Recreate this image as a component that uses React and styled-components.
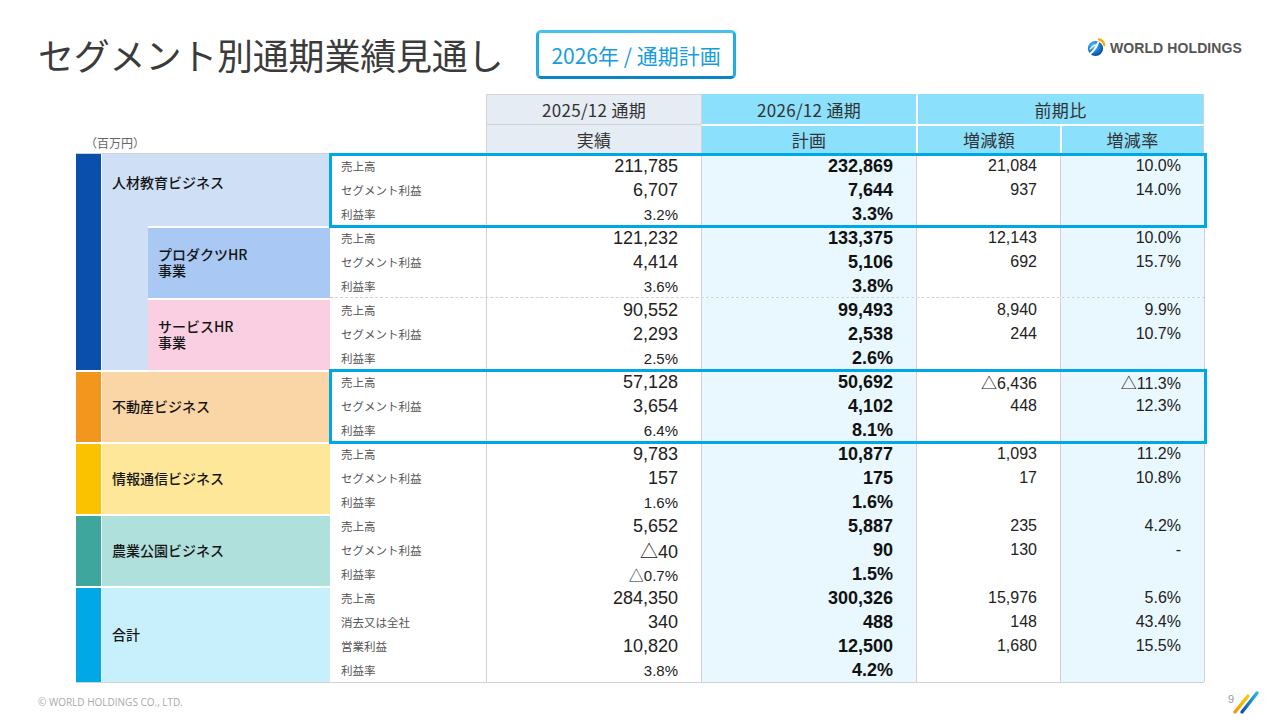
import styled, { createGlobalStyle } from 'styled-components';


const LINE = '#cfd2d6';
const PLAN_BG = '#e9f8fe';
const HEAD_PLAN = '#8be0fb';
const HEAD_PAST = '#e6ecf3';
const ACCENT = '#00a7e5';
const NUM_FONT = '"Liberation Sans", "Noto Sans CJK JP", sans-serif';


const GlobalStyle = createGlobalStyle`
    html, body {
        margin: 0;
        padding: 0;
        background: #fff;
        font-family: "Noto Sans CJK JP", "Noto Sans", sans-serif;
        color: #222;
    }
`;

const Page = styled.div`
    width: 1280px;
    height: 720px;
    display: flex;
    flex-direction: column;
    overflow: hidden;
    background: #fff;
`;

const TopBar = styled.header`
    display: flex;
    align-items: center;
    height: 49px;
    padding: 30px 38px 0 38px;
`;
const Title = styled.h1`
    margin: 0;
    font-size: 36px;
    font-weight: 400;
    line-height: 49px;
    color: #3b3b3b;
    letter-spacing: -0.2px;
`;
const Badge = styled.div`
    margin-left: 33px;
    height: 43px;
    padding: 0 12px;
    display: flex;
    align-items: center;
    border: 3px solid #22ade6;
    border-top-color: #45c3f0;
    border-bottom-color: #0a86c4;
    border-radius: 5px;
    color: #169ddd;
    font-size: 21px;
    white-space: nowrap;
`;
const Logo = styled.div`
    margin-left: auto;
    align-self: flex-start;
    margin-top: 8px;
    display: flex;
    align-items: center;
    gap: 4px;
`;
const LogoText = styled.span`
    font-family: "Liberation Sans", sans-serif;
    font-weight: 700;
    font-size: 14px;
    color: #555;
    letter-spacing: 0.1px;
`;

const Table = styled.section`
    margin: 15px 0 0 76px;
    width: 1128px;
`;

const HeadGrid = styled.div`
    display: grid;
    grid-template-columns: 410px 215px 215px 144px 144px;
    grid-template-rows: 30px 29px;
`;
const HeadCorner = styled.div`
    grid-column: 1;
    grid-row: 1 / 3;
    display: flex;
    align-items: flex-end;
`;
const Unit = styled.span`
    padding: 0 0 2px 9px;
    font-size: 12px;
    color: #666;
`;
const HeadCell = styled.div`
    grid-column: ${p => p.$col};
    grid-row: ${p => p.$row};
    display: flex;
    align-items: center;
    justify-content: center;
    background: ${p => p.$past ? HEAD_PAST : HEAD_PLAN};
    border-left: ${p => p.$left || 'none'};
    border-top: ${p => p.$top || 'none'};
    border-right: ${p => p.$last ? `1px solid ${LINE}` : 'none'};
    font-size: 17px;
    color: #333;
    letter-spacing: 0.3px;
`;

const Body = styled.div`
    border-top: 1px solid ${LINE};
    border-bottom: 1px solid ${LINE};
`;
const Segment = styled.div`
    display: flex;
`;
const Bar = styled.div`
    width: 26px;
    flex: none;
    background: ${p => p.$color};
    box-shadow: inset -1px 0 0 #fff ${p => p.$first ? '' : ', inset 0 2px 0 #fff'};
`;
const Stack = styled.div`
    display: flex;
    flex-direction: column;
    background: ${p => p.$bg || 'transparent'};
    box-shadow: ${p => p.$first ? 'none' : 'inset 0 2px 0 #fff'};
`;
const Block = styled.div`
    display: flex;
`;
const Label = styled.div`
    flex: none;
    width: ${p => p.$sub ? '182px' : '228px'};
    margin-left: ${p => p.$sub ? '46px' : '0'};
    box-sizing: border-box;
    padding: 0 0 ${p => p.$raise ? '16px' : '0'} 10px;
    display: flex;
    align-items: center;
    background: ${p => p.$bg};
    box-shadow: ${p => p.$top ? 'inset 0 2px 0 #fff' : 'none'};
    font-size: 14px;
    font-weight: 500;
    line-height: 16px;
    color: #151515;
    white-space: pre-line;
`;
const Rows = styled.div`
    position: relative;
    z-index: ${p => p.$highlight ? 2 : 1};
    width: 874px;
    display: grid;
    grid-template-columns: 156px 215px 215px 144px 144px;
    grid-auto-rows: 24px;
    background: #fff;
    border-right: 1px solid ${LINE};
    border-top: ${p => p.$line === 'none' ? 'none' : `1px ${p.$line} ${LINE}`};
    margin-top: ${p => p.$line === 'none' ? '0' : '-1px'};
    &::after {
        content: "";
        display: ${p => p.$highlight ? 'block' : 'none'};
        position: absolute;
        inset: -1px -3px -2px -1px;
        border: 3px solid ${ACCENT};
        pointer-events: none;
    };
`;
const Item = styled.div`
    display: flex;
    align-items: center;
    padding-left: 11px;
    font-size: 11.5px;
    color: #555;
`;
const Num = styled.div`
    display: flex;
    align-items: center;
    justify-content: flex-end;
    padding-right: 23px;
    border-left: 1px solid ${LINE};
    background: ${p => p.$plan ? PLAN_BG : '#fff'};
    font-family: ${NUM_FONT};
    font-size: ${p => p.$size}px;
    font-weight: ${p => p.$bold ? 700 : 400};
    color: ${p => p.$bold ? '#111' : '#222'};
`;

const Footer = styled.footer`
    margin-top: auto;
    height: 38px;
    display: flex;
    align-items: center;
    justify-content: space-between;
    padding: 0 18px 0 38px;
`;
const Copy = styled.span`
    font-family: "Open Sans", "Liberation Sans", sans-serif;
    font-size: 10px;
    color: #a8a8a8;
`;
const PageMark = styled.div`
    display: flex;
    align-items: flex-start;
    height: 26px;
`;
const PageNo = styled.span`
    font-family: "Liberation Sans", sans-serif;
    font-size: 11px;
    color: #9a9a9a;
    margin-top: 4px;
    margin-right: -4px;
`;


const SEGMENTS = [
    {
        name: '人材教育ビジネス', bar: '#0a4fac', bg: '#cfdff5', raise: true, highlight: true,
        rows: [
            ['売上高', '211,785', '232,869', '21,084', '10.0%'],
            ['セグメント利益', '6,707', '7,644', '937', '14.0%'],
            ['利益率', '3.2%', '3.3%', '', '', true],
        ],
        subs: [
            {
                name: 'プロダクツHR\n事業', bg: '#a9c8f3', line: 'solid',
                rows: [
                    ['売上高', '121,232', '133,375', '12,143', '10.0%'],
                    ['セグメント利益', '4,414', '5,106', '692', '15.7%'],
                    ['利益率', '3.6%', '3.8%', '', '', true],
                ],
            },
            {
                name: 'サービスHR\n事業', bg: '#f9cfe1', line: 'dashed',
                rows: [
                    ['売上高', '90,552', '99,493', '8,940', '9.9%'],
                    ['セグメント利益', '2,293', '2,538', '244', '10.7%'],
                    ['利益率', '2.5%', '2.6%', '', '', true],
                ],
            },
        ],
    },
    {
        name: '不動産ビジネス', bar: '#f2961e', bg: '#fad5a6', highlight: true,
        rows: [
            ['売上高', '57,128', '50,692', '△6,436', '△11.3%'],
            ['セグメント利益', '3,654', '4,102', '448', '12.3%'],
            ['利益率', '6.4%', '8.1%', '', '', true],
        ],
    },
    {
        name: '情報通信ビジネス', bar: '#fbc200', bg: '#fee798',
        rows: [
            ['売上高', '9,783', '10,877', '1,093', '11.2%'],
            ['セグメント利益', '157', '175', '17', '10.8%'],
            ['利益率', '1.6%', '1.6%', '', '', true],
        ],
    },
    {
        name: '農業公園ビジネス', bar: '#3fa69d', bg: '#b0e0dc',
        rows: [
            ['売上高', '5,652', '5,887', '235', '4.2%'],
            ['セグメント利益', '△40', '90', '130', '-'],
            ['利益率', '△0.7%', '1.5%', '', '', true],
        ],
    },
    {
        name: '合計', bar: '#00a8e6', bg: '#c8f0fc',
        rows: [
            ['売上高', '284,350', '300,326', '15,976', '5.6%'],
            ['消去又は全社', '340', '488', '148', '43.4%'],
            ['営業利益', '10,820', '12,500', '1,680', '15.5%'],
            ['利益率', '3.8%', '4.2%', '', '', true],
        ],
    },
];


function LogoMark() {
    return (
        <svg width="19" height="19" viewBox="0 0 19 19">
            <defs>
                <radialGradient id="globe" cx="38%" cy="35%" r="70%">
                    <stop offset="0" stopColor="#6fd0f5" />
                    <stop offset="0.55" stopColor="#1a7fd0" />
                    <stop offset="1" stopColor="#0a3f98" />
                </radialGradient>
            </defs>
            <circle cx="8.5" cy="10.5" r="7.6" fill="url(#globe)" />
            <path d="M3.5 15.5 C6.5 13 9.5 9.5 11.2 4.2" stroke="#fff" strokeWidth="2" fill="none" strokeLinecap="round" />
            <path d="M10.5 6.5 C7.5 7 5 8.5 3 11" stroke="#fff" strokeWidth="1.2" fill="none" strokeLinecap="round" />
            <path d="M11.8 1.4 C14.8 2 17 4.3 17.4 7.3" stroke="#f6ac00" strokeWidth="2.1" fill="none" strokeLinecap="round" />
        </svg>
    )
}

function Slashes() {
    return (
        <svg width="32" height="26" viewBox="0 0 32 26">
            <defs>
                <linearGradient id="slY" x1="0" y1="1" x2="1" y2="0">
                    <stop offset="0" stopColor="#f29a00" />
                    <stop offset="1" stopColor="#fdc900" />
                </linearGradient>
                <linearGradient id="slB" x1="0" y1="1" x2="1" y2="0">
                    <stop offset="0" stopColor="#0a4fb0" />
                    <stop offset="1" stopColor="#25b6ec" />
                </linearGradient>
            </defs>
            <line x1="5" y1="23" x2="18" y2="7" stroke="url(#slY)" strokeWidth="3.4" strokeLinecap="round" />
            <line x1="12" y1="23" x2="27" y2="4" stroke="url(#slB)" strokeWidth="3.4" strokeLinecap="round" />
        </svg>
    )
}

function DataRows({ rows, line, highlight }) {
    return (
        <Rows $line={line} $highlight={highlight}>
            {rows.map(([item, past, plan, diff, rate, pct]) => [
                <Item key={`${item}-i`}>{item}</Item>,
                <Num key={`${item}-a`} $size={pct ? 15 : 18}>{past}</Num>,
                <Num key={`${item}-b`} $size={18} $bold $plan>{plan}</Num>,
                <Num key={`${item}-c`} $size={16}>{diff}</Num>,
                <Num key={`${item}-d`} $size={16} $plan>{rate}</Num>,
            ])}
        </Rows>
    )
}

function SegmentRow({ seg, first }) {
    return (
        <Segment>
            <Bar $color={seg.bar} $first={first} />
            <Stack $bg={seg.subs ? seg.bg : null} $first={first}>
                <Block>
                    <Label $bg={seg.bg} $raise={seg.raise} $top={!first}>{seg.name}</Label>
                    <DataRows rows={seg.rows} line="none" highlight={seg.highlight} />
                </Block>
                {seg.subs && seg.subs.map(sub => (
                    <Block key={sub.name}>
                        <Label $sub $bg={sub.bg} $top>{sub.name}</Label>
                        <DataRows rows={sub.rows} line={sub.line} />
                    </Block>
                ))}
            </Stack>
        </Segment>
    )
}

export default function App() {
    return (
        <>
            <GlobalStyle />
            <Page>
                <TopBar>
                    <Title>セグメント別通期業績見通し</Title>
                    <Badge>2026年 / 通期計画</Badge>
                    <Logo>
                        <LogoMark />
                        <LogoText>WORLD HOLDINGS</LogoText>
                    </Logo>
                </TopBar>

                <Table>
                    <HeadGrid>
                        <HeadCorner><Unit>（百万円）</Unit></HeadCorner>
                        <HeadCell $col="2" $row="1" $past $left={`1px solid ${LINE}`} $top={`1px solid ${LINE}`}>2025/12 通期</HeadCell>
                        <HeadCell $col="2" $row="2" $past $left={`1px solid ${LINE}`} $top={`1px solid ${LINE}`}>実績</HeadCell>
                        <HeadCell $col="3" $row="1" $left={`1px solid ${LINE}`}>2026/12 通期</HeadCell>
                        <HeadCell $col="3" $row="2" $left={`1px solid ${LINE}`} $top="2px solid #fff">計画</HeadCell>
                        <HeadCell $col="4 / 6" $row="1" $left="2px solid #fff" $last>前期比</HeadCell>
                        <HeadCell $col="4" $row="2" $left="2px solid #fff" $top="2px solid #fff">増減額</HeadCell>
                        <HeadCell $col="5" $row="2" $left="2px solid #fff" $top="2px solid #fff" $last>増減率</HeadCell>
                    </HeadGrid>
                    <Body>
                        {SEGMENTS.map((seg, i) => (
                            <SegmentRow key={seg.name} seg={seg} first={i === 0} />
                        ))}
                    </Body>
                </Table>

                <Footer>
                    <Copy>© WORLD HOLDINGS CO., LTD.</Copy>
                    <PageMark>
                        <PageNo>9</PageNo>
                        <Slashes />
                    </PageMark>
                </Footer>
            </Page>
        </>
    )
}
